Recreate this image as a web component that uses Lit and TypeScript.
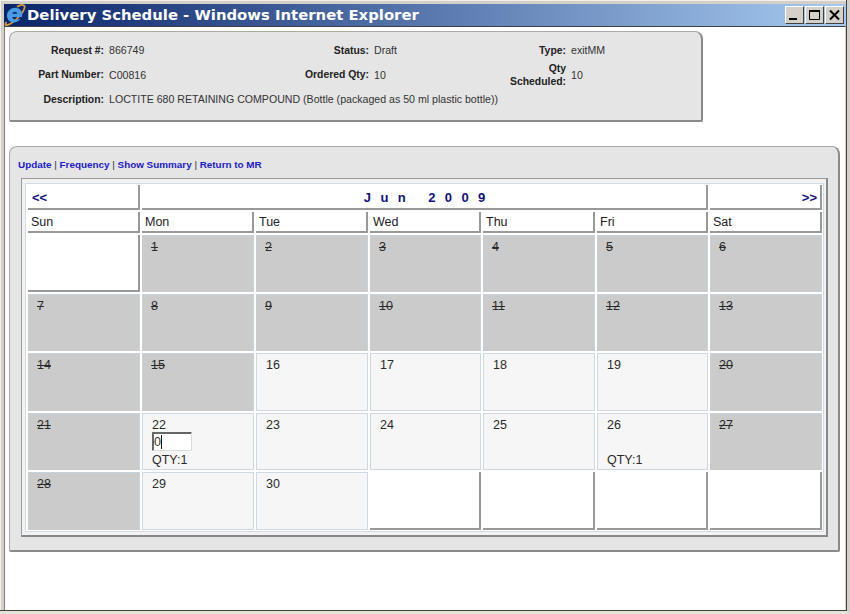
import { LitElement, html, css, svg } from 'lit';
import { customElement } from 'lit/decorators.js';

type Kind = 'off' | 'open' | 'blank';
interface Day {
  kind: Kind;
  label?: string;
  input?: boolean;
  qty?: string;
}

const OFF = new Set([1, 2, 3, 4, 5, 6, 7, 8, 9, 10, 11, 12, 13, 14, 15, 20, 21, 27, 28]);

function buildDays(): Day[] {
  const days: Day[] = [{ kind: 'blank' }];
  for (let d = 1; d <= 30; d++) {
    const day: Day = { kind: OFF.has(d) ? 'off' : 'open', label: String(d) };
    if (d === 22) {
      day.input = true;
      day.qty = 'QTY:1';
    }
    if (d === 26) day.qty = 'QTY:1';
    days.push(day);
  }
  while (days.length < 35) days.push({ kind: 'blank' });
  return days;
}

const ieIcon = svg`
  <svg class="ie" viewBox="0 0 22 22" width="22" height="22" aria-hidden="true">
    <path d="M2.5 18 C0 21.5 2 22 6 20 C12 17 19 9 20.5 4 C21.5 0.5 18 0 13 2.6" fill="none" stroke="#d49a3a" stroke-width="1.8"/>
    <path d="M18 13 H8.4 C8.6 16 13 16.6 16.6 14.6 C15 19.5 3.4 20.6 3 12 C2.8 6.4 8 3.2 12.4 3.8 C17 4.4 18.8 9 18 13 Z M8.4 9.8 H13.2 C13 7 8.8 7 8.4 9.8 Z" fill="#4a9be6" fill-rule="evenodd"/>
  </svg>
`;

@customElement('app-root')
export class AppRoot extends LitElement {
  static styles = css`
    :host {
      display: block;
      width: 850px;
      height: 614px;
      font-family: 'Liberation Sans', Arial, sans-serif;
      color: #222;
    }

    .window {
      box-sizing: border-box;
      width: 850px;
      height: 614px;
      display: flex;
      flex-direction: column;
      background: #d4d0c8;
      padding: 4px 1px 1px 4px;
      border-right: 3px solid #d4d0c8;
      border-bottom: 3px solid #e6e3da;
      box-shadow: inset -1px -1px 0 #404040, inset 1px 1px 0 #f2f0ea;
    }

    .titlebar {
      height: 22px;
      flex: none;
      display: flex;
      align-items: center;
      background: linear-gradient(90deg, #0a246a 0%, #a6caf0 100%);
      padding-right: 2px;
    }

    .ie {
      flex: none;
    }

    .title {
      flex: 1;
      color: #fff;
      font: bold 14.85px 'DejaVu Sans', Verdana, sans-serif;
      white-space: nowrap;
      margin-left: 1px;
    }

    .winbtn {
      box-sizing: border-box;
      width: 19px;
      height: 18px;
      margin: 0 0 1px 1px;
      background: #d4d0c8;
      border: 1px solid;
      border-color: #fff #404040 #404040 #fff;
      display: flex;
      align-items: center;
      justify-content: center;
      padding: 0;
    }

    .content {
      flex: 1;
      background: #fff;
      border-left: 1px solid #808080;
      border-top: 1px solid #404040;
      border-right: 1px solid #d4d0c8;
      padding: 4px 5px 0 4px;
    }

    .card {
      box-sizing: border-box;
      background: #e5e5e5;
      border: 1px solid #a8a8a8;
      border-right: 2px solid #8a8a8a;
      border-bottom: 2px solid #8a8a8a;
      border-radius: 8px 8px 2px 2px;
    }

    .info {
      width: 694px;
      height: 91px;
      padding-top: 6px;
      display: grid;
      grid-template-columns: 94px 160px 95px 97px 90px 1fr;
      grid-template-rows: 24px 25px 24px;
      column-gap: 5px;
      align-items: center;
    }

    .lbl {
      font-size: 10.4px;
      font-weight: bold;
      text-align: right;
      line-height: 13px;
    }

    .val {
      font-size: 10.6px;
      color: #333;
    }

    .desc {
      grid-column: 2 / -1;
    }

    .sched {
      margin-top: 24px;
      width: 831px;
      height: 406px;
      padding: 12px 12px 0 11px;
    }

    .links {
      font-size: 9.9px;
      line-height: 12px;
      height: 19px;
      margin-left: -3px;
      color: #333;
    }

    .links a {
      color: #1a1acc;
      text-decoration: none;
      font-weight: bold;
    }

    .frame {
      box-sizing: border-box;
      width: 807px;
      height: 359px;
      background: #f2f2f2;
      border: 1px solid #9a9a9a;
      border-right: 2px solid #888;
      border-bottom: 2px solid #888;
      padding: 4px 2px 3px 3px;
    }

    .cal {
      box-sizing: border-box;
      width: 799px;
      height: 349px;
      background: #fff;
      border: 1px solid #d3dce6;
      padding: 1px 2px;
      display: grid;
      grid-template-columns: 112px 112px 112px 111px 112px 111px 112px;
      grid-template-rows: 25px 21px 57px 57px 58px 57px 58px;
      gap: 2px;
    }

    .head {
      box-sizing: border-box;
      background: #fff;
      border-right: 2px solid #999;
      border-bottom: 2px solid #999;
      font-size: 12.5px;
      display: flex;
      align-items: center;
      padding: 0 3px;
    }

    .nav {
      color: #10107f;
      font-weight: bold;
      font-size: 13px;
      padding: 2px 4px 0;
    }

    .nav.next {
      justify-content: flex-end;
      padding-right: 3px;
    }

    .month {
      grid-column: span 5;
      justify-content: center;
      color: #10107f;
      font-weight: bold;
      font-size: 13px;
      white-space: pre;
      letter-spacing: 2.9px;
      padding: 2px 0 0 4px;
    }

    .cell {
      box-sizing: border-box;
      font-size: 12.5px;
      line-height: 14px;
      padding: 4px 0 0 9px;
      position: relative;
      color: #2a2a2a;
    }

    .off {
      background: #cbcbcb;
      border-top: 1px solid #c5d2de;
      border-right: 1px solid #c5d2de;
    }

    .off .num {
      text-decoration: line-through;
    }

    .open {
      background: #f6f6f6;
      border: 1px solid #cdd8e4;
    }

    .blank {
      background: #fff;
      border-right: 2px solid #999;
      border-bottom: 2px solid #999;
    }

    .qty-input {
      position: relative;
      width: 40px;
      height: 19px;
    }

    .qty-input input {
      box-sizing: border-box;
      width: 40px;
      height: 19px;
      margin: 0;
      padding: 0 0 0 1px;
      font: 12.5px 'Liberation Sans', Arial, sans-serif;
      color: #333;
      background: #fff;
      border: 1px solid;
      border-color: #666 #ddd #ddd #666;
      outline: none;
      box-shadow: inset 1px 1px 0 #666;
    }

    .caret {
      position: absolute;
      left: 9px;
      top: 3px;
      width: 1px;
      height: 14px;
      background: #111;
    }

    .qty {
      position: absolute;
      left: 9px;
      top: 39px;
    }
  `;

  private _renderDay(day: Day) {
    return html`
      <div class="cell ${day.kind}">
        ${day.label ? html`<div class="num">${day.label}</div>` : ''}
        ${day.input
          ? html`<div class="qty-input"><input type="text" .value=${'0'} /><span class="caret"></span></div>`
          : ''}
        ${day.qty ? html`<div class="qty">${day.qty}</div>` : ''}
      </div>
    `;
  }

  render() {
    const dows = ['Sun', 'Mon', 'Tue', 'Wed', 'Thu', 'Fri', 'Sat'];
    return html`
      <div class="window">
        <div class="titlebar">
          ${ieIcon}
          <div class="title">Delivery Schedule - Windows Internet Explorer</div>
          <button class="winbtn" aria-label="Minimize">
            <svg width="13" height="12" viewBox="0 0 13 12"><rect x="1" y="9" width="8" height="2" fill="#000"/></svg>
          </button>
          <button class="winbtn" aria-label="Maximize">
            <svg width="13" height="12" viewBox="0 0 13 12"><path d="M1.5 2.5h10v8h-10z" fill="none" stroke="#000"/><rect x="1" y="1" width="11" height="2" fill="#000"/></svg>
          </button>
          <button class="winbtn" aria-label="Close">
            <svg width="13" height="12" viewBox="0 0 13 12"><path d="M2 1.5l9 9M11 1.5l-9 9" stroke="#000" stroke-width="2" fill="none"/></svg>
          </button>
        </div>
        <div class="content">
          <div class="card info">
            <div class="lbl">Request #:</div>
            <div class="val">866749</div>
            <div class="lbl">Status:</div>
            <div class="val">Draft</div>
            <div class="lbl">Type:</div>
            <div class="val">exitMM</div>
            <div class="lbl">Part Number:</div>
            <div class="val">C00816</div>
            <div class="lbl">Ordered Qty:</div>
            <div class="val">10</div>
            <div class="lbl">Qty<br />Scheduled:</div>
            <div class="val">10</div>
            <div class="lbl">Description:</div>
            <div class="val desc">LOCTITE 680 RETAINING COMPOUND (Bottle (packaged as 50 ml plastic bottle))</div>
          </div>
          <div class="card sched">
            <div class="links">
              <a href="#">Update</a> |
              <a href="#">Frequency</a> |
              <a href="#">Show Summary</a> |
              <a href="#">Return to MR</a>
            </div>
            <div class="frame">
              <div class="cal">
                <div class="head nav">&lt;&lt;</div>
                <div class="head month">J u n   2 0 0 9</div>
                <div class="head nav next">&gt;&gt;</div>
                ${dows.map((d) => html`<div class="head">${d}</div>`)}
                ${buildDays().map((d) => this._renderDay(d))}
              </div>
            </div>
          </div>
        </div>
      </div>
    `;
  }
}

declare global {
  interface HTMLElementTagNameMap {
    'app-root': AppRoot;
  }
}
